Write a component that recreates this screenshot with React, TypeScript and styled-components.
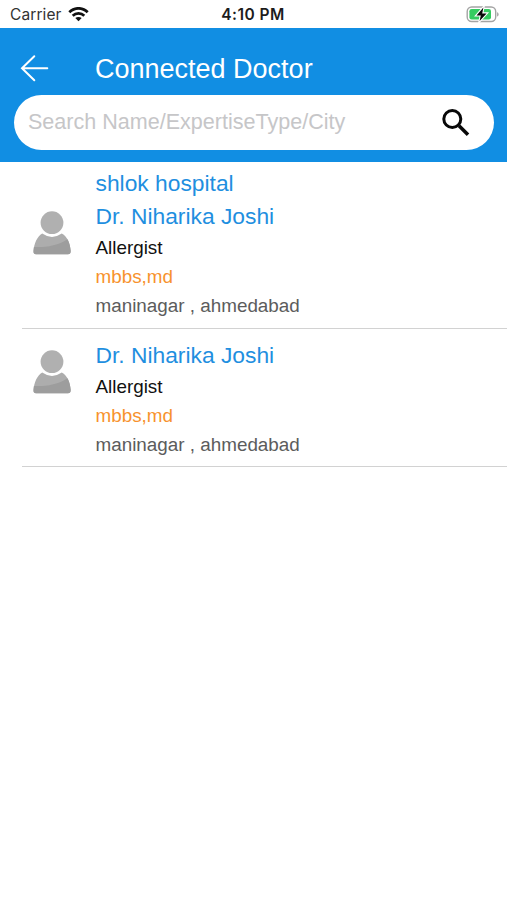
import React from "react";
import styled, { createGlobalStyle } from "styled-components";

const GlobalStyle = createGlobalStyle`
  * { box-sizing: border-box; }
  body {
    margin: 0;
    background: #fff;
    font-family: "Liberation Sans", Arial, sans-serif;
  }
`;

const Screen = styled.main`
  width: 507px;
  height: 900px;
  overflow: hidden;
  background: #fff;
`;

const StatusBar = styled.div`
  height: 28px;
  display: grid;
  grid-template-columns: 1fr auto 1fr;
  align-items: center;
  padding: 2px 9px 0 8px;
  font-family: Inter, sans-serif;
  font-size: 15.5px;
  line-height: 26px;
  color: #333;
`;

const Carrier = styled.div`
  display: flex;
  align-items: center;
  gap: 6px;
  padding-left: 2px;
  letter-spacing: 0.1px;
`;

const Clock = styled.time`
  font-weight: 600;
  color: #1c1c1c;
  letter-spacing: 0.5px;
`;

const BatterySlot = styled.div`
  display: flex;
  justify-content: flex-end;
  margin-right: -1px;
`;

const Header = styled.header`
  height: 134px;
  background: #118ee3;
`;

const TitleRow = styled.div`
  height: 67px;
  display: flex;
  align-items: center;
  padding: 13px 0 0 20px;
`;

const BackButton = styled.button`
  width: 75px;
  height: 28px;
  padding: 0;
  border: 0;
  background: none;
  svg { display: block; }
`;

const Title = styled.h1`
  margin: 0;
  padding-top: 2px;
  color: #fff;
  font-size: 27px;
  line-height: 30px;
  font-weight: 400;
  white-space: nowrap;
`;

const SearchBar = styled.label`
  height: 55px;
  margin: 0 13px 0 14px;
  padding: 0 24px 2px 14px;
  border-radius: 28px;
  background: #fff;
  display: flex;
  align-items: center;
  svg { flex: none; margin-top: 2px; }
`;

const SearchInput = styled.input`
  flex: 1;
  min-width: 0;
  border: 0;
  padding: 0;
  outline: 0;
  background: none;
  font: 21.55px "Liberation Sans", Arial, sans-serif;
  &::placeholder { color: #c6c6c8; opacity: 1; }
`;

const Entry = styled.article<{ $height: number; $top: number }>`
  height: ${(p) => p.$height}px;
  margin-left: 22px;
  padding-top: ${(p) => p.$top}px;
  display: flex;
  border-bottom: 1px solid #d2d2d2;
`;

const Avatar = styled.div<{ $offset: number }>`
  width: 73.5px;
  padding: ${(p) => p.$offset}px 0 0 11px;
  svg { display: block; }
`;

const Details = styled.div`
  white-space: nowrap;
`;

const Name = styled.div<{ $height: number }>`
  font-size: 22.8px;
  line-height: ${(p) => p.$height}px;
  height: ${(p) => p.$height}px;
  color: #1f8fe0;
`;

const Line = styled.div<{ $color: string }>`
  font-size: 18.85px;
  line-height: 29px;
  height: 29px;
  color: ${(p) => p.$color};
`;

const WifiIcon = () => (
  <svg width="21" height="16" viewBox="0 0 21 16" fill="none" stroke="#111" strokeWidth="2.7">
    <path d="M1.3 5.2C6.5 0 14.5 0 19.7 5.2" />
    <path d="M4.7 8.7C8 5.5 13 5.5 16.3 8.7" />
    <path d="M10.5 14.3 7.3 11.1C9.1 9.5 11.9 9.5 13.7 11.1Z" fill="#111" stroke="none" />
  </svg>
);

const BatteryIcon = () => (
  <svg width="33" height="18" viewBox="0 0 33 18">
    <rect x="1.2" y="1" width="28.5" height="14.5" rx="4.5" fill="#fff" stroke="#a4a4a4" strokeWidth="1.4" />
    <rect x="3.4" y="3.1" width="21.6" height="10.3" rx="2.2" fill="#35cc60" />
    <path d="M31.2 6.2c1.8.6 1.8 3.8 0 4.4Z" fill="#999" />
    <path d="M17.4 1.6 10.5 9.4h4.3l-1.2 5.7 7-7.7h-4.4Z" fill="#080808" stroke="#fff" strokeWidth="2.2" paintOrder="stroke" />
  </svg>
);

const BackIcon = () => (
  <svg width="30" height="28" viewBox="0 0 30 28" fill="none" stroke="#fff" strokeWidth="2" strokeLinecap="round">
    <path d="M14.3 2.3 2 14.3l12.3 12M2 14.3h25.3" />
  </svg>
);

const SearchIcon = () => (
  <svg width="28" height="28" viewBox="0 0 28 28" fill="none" stroke="#080808">
    <circle cx="10.3" cy="10" r="8.5" strokeWidth="3" />
    <path d="m17 16.7 9 9" strokeWidth="3.6" />
  </svg>
);

const PersonIcon = () => (
  <svg width="38" height="44" viewBox="0 0 38 44">
    <circle cx="19" cy="11.7" r="11.4" fill="#b0b0b0" />
    <path d="M9.2 22.5Q19 29.3 28.8 22.5C34.5 25.5 37.2 32.5 37.7 40Q37.7 43.3 35 43.3H3Q.3 43.3.5 40C1.2 32.5 4 25.5 9.2 22.5Z" fill="#adadad" />
    <path d="M.9 36C12 36.5 25 35 34.4 28.3 36.5 32 37.3 36 37.7 40Q37.7 43.3 35 43.3H3Q.3 43.3.5 40Z" fill="#9d9d9d" />
  </svg>
);

type DoctorProps = { hospital?: string };

const Doctor = ({ hospital }: DoctorProps) => (
  <Entry $height={hospital ? 167 : 138} $top={hospital ? 4 : 10}>
    <Avatar $offset={hospital ? 45 : 11}><PersonIcon /></Avatar>
    <Details>
      {hospital && <Name $height={34}>{hospital}</Name>}
      <Name $height={33}>Dr. Niharika Joshi</Name>
      <Line $color="#111">Allergist</Line>
      <Line $color="#f7922d">mbbs,md</Line>
      <Line $color="#5c5c5c">maninagar , ahmedabad</Line>
    </Details>
  </Entry>
);

export default function App() {
  return (
    <Screen>
      <GlobalStyle />
      <StatusBar>
        <Carrier>Carrier<WifiIcon /></Carrier>
        <Clock>4:10 PM</Clock>
        <BatterySlot><BatteryIcon /></BatterySlot>
      </StatusBar>
      <Header>
        <TitleRow>
          <BackButton aria-label="Back"><BackIcon /></BackButton>
          <Title>Connected Doctor</Title>
        </TitleRow>
        <SearchBar>
          <SearchInput placeholder="Search Name/ExpertiseType/City" />
          <SearchIcon />
        </SearchBar>
      </Header>
      <Doctor hospital="shlok hospital" />
      <Doctor />
    </Screen>
  );
}
